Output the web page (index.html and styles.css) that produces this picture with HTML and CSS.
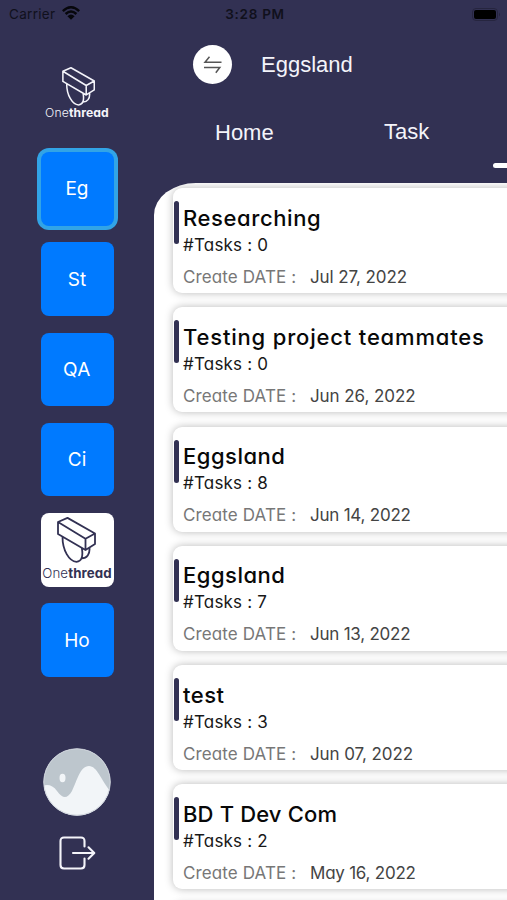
FILE: index.html
```html
<!DOCTYPE html>
<html lang="en">
<head>
<meta charset="utf-8">
<title>Onethread</title>
<link rel="stylesheet" href="styles.css">
</head>
<body>
<svg class="defs" width="0" height="0" aria-hidden="true">
  <symbol id="logo" viewBox="0 0 40 46">
    <path d="M1 5 10.5 .9 38 16.5V27L28.5 33 1 17ZM1 5 28.5 21.8 38 16.5M28.5 21.8V33M5.5 20C5.5 33 12 44.3 19.5 44.8 24.8 44.6 26.3 39 24.8 31M32.5 31C33 37 30 41.5 24.5 41.3"/>
  </symbol>
</svg>
<div class="app">
  <header class="status">
    <div class="carrier"><span>Carrier</span>
      <svg width="18" height="14" viewBox="0 0 18 14"><path d="M0.8 5.2Q9-2.6 17.2 5.2M3.6 8Q9 3 14.4 8" fill="none" stroke="#07070c" stroke-width="2.5"/><path d="M5.4 10.2Q9 7 12.6 10.2L9 13.8Z" fill="#07070c"/></svg>
    </div>
    <div class="clock">3:28 PM</div>
    <svg class="battery" width="29" height="13" viewBox="0 0 29 13"><rect x=".5" y=".5" width="25" height="12" rx="3.5" fill="none" stroke="#26253f"/><rect x="2" y="2" width="22" height="9" rx="2" fill="#000"/><path d="M27 4.5Q29 6.5 27 8.5Z" fill="#26253f"/></svg>
  </header>
  <div class="columns">
    <nav class="sidebar">
      <div class="brand"><svg class="mark" width="34" height="39"><use href="#logo"/></svg><div class="word">One<b>thread</b></div></div>
      <div class="tiles">
        <div class="tile active">Eg</div>
        <div class="tile">St</div>
        <div class="tile wide">QA</div>
        <div class="tile">Ci</div>
        <div class="tile light"><svg class="mark" width="40" height="46"><use href="#logo"/></svg><div class="word">One<b>thread</b></div></div>
        <div class="tile">Ho</div>
      </div>
      <svg class="avatar" width="68" height="68" viewBox="0 0 68 68"><defs><clipPath id="disc"><circle cx="34" cy="34" r="33.5"/></clipPath></defs><g clip-path="url(#disc)"><rect width="68" height="68" fill="#bdc6cd"/><path d="M0 38C4 36 10 37 14 43 20 51 24 51 29 43 34 33 37 18 46 18 54 18 58 32 68 44V68H0Z" fill="#f2f5f8"/><ellipse cx="19.5" cy="30" rx="3" ry="4.2" fill="#f2f5f8"/></g><circle cx="34" cy="34" r="33.2" fill="none" stroke="#d0d5dd" stroke-width="1"/></svg>
      <svg class="logout" width="37" height="34" viewBox="0 0 37 34"><path d="M25.5 10.5V5Q25.5 1.5 22 1.5H5Q1.5 1.5 1.5 5V29Q1.5 32.5 5 32.5H22Q25.5 32.5 25.5 29V22.5M14 17H35M29.5 11.3 35.3 17 29.5 22.7" fill="none" stroke="#f4f4fa" stroke-width="2.1" stroke-linecap="round" stroke-linejoin="round"/></svg>
    </nav>
    <main class="main">
      <div class="heading">
        <div class="switch"><svg width="20" height="18" viewBox="0 0 20 18"><path d="M6.5 .8 2 6.2H18.5M1 11.5H16.8L12.8 16.8" fill="none" stroke="#555" stroke-width="1.5"/></svg></div>
        <h1>Eggsland</h1>
      </div>
      <div class="tabs"><span class="home">Home</span><span class="task">Task</span><i></i></div>
      <section class="panel">
        <article class="card"><i></i><h2 class="t1">Researching</h2><p>#Tasks : 0</p><footer><span>Create DATE :</span><time>Jul 27, 2022</time></footer></article>
        <article class="card"><i></i><h2 class="t2">Testing project teammates</h2><p>#Tasks : 0</p><footer><span>Create DATE :</span><time>Jun 26, 2022</time></footer></article>
        <article class="card"><i></i><h2 class="t3">Eggsland</h2><p>#Tasks : 8</p><footer><span>Create DATE :</span><time class="narrow">Jun 14, 2022</time></footer></article>
        <article class="card"><i></i><h2 class="t3">Eggsland</h2><p>#Tasks : 7</p><footer><span>Create DATE :</span><time class="narrow">Jun 13, 2022</time></footer></article>
        <article class="card"><i></i><h2 class="t3">test</h2><p>#Tasks : 3</p><footer><span>Create DATE :</span><time>Jun 07, 2022</time></footer></article>
        <article class="card"><i></i><h2 class="t6">BD T Dev Com</h2><p>#Tasks : 2</p><footer><span>Create DATE :</span><time class="narrow">May 16, 2022</time></footer></article>
        <article class="card"></article>
      </section>
    </main>
  </div>
</div>
</body>
</html>
```
FILE: styles.css
```css
* { box-sizing: border-box; }
body { margin: 0; background: #323153; font-family: Inter, sans-serif; font-feature-settings: "cv11"; }
h1, h2, p { margin: 0; }
.defs { display: block; height: 0; }
.app { width: 507px; height: 900px; overflow: hidden; display: flex; flex-direction: column; }
.status { height: 28px; display: grid; grid-template-columns: 1fr 80px 1fr; align-items: center; padding: 0 6px 0 9px; color: #10101c; font-size: 13px; }
.carrier { display: flex; gap: 7px; align-items: center; font-size: 13.5px; letter-spacing: .3px; font-feature-settings: normal; }
.carrier svg { margin-top: -2px; }
.clock { text-align: center; font-weight: 600; font-size: 13.5px; letter-spacing: .7px; white-space: nowrap; }
.battery { justify-self: end; }
.columns { flex: 1; min-height: 0; display: flex; }
.sidebar { width: 154px; display: flex; flex-direction: column; align-items: center; padding-top: 39px; }
.brand { height: 85px; display: flex; flex-direction: column; align-items: center; color: #f4f4fa; }
.mark { fill: none; stroke: currentColor; stroke-width: 1.8; stroke-linejoin: round; flex: none; }
.brand .mark { margin-left: 4px; }
.word { font-size: 12.2px; line-height: 14px; font-weight: 300; letter-spacing: .1px; white-space: nowrap; }
.word b { font-weight: 700; }
.tiles { display: grid; grid-auto-rows: 73.5px; gap: 16.8px; width: 73px; }
.tile { background: #007aff; border-radius: 8px; color: #fff; font-size: 19px; display: flex; align-items: center; justify-content: center; }
.tile.wide { letter-spacing: .4px; }
.tile.active { box-shadow: 0 0 0 4px #32a4e6; }
.tile.light { background: #fff; color: #323153; flex-direction: column; justify-content: flex-start; padding-top: 4px; }
.tile.light .word { font-size: 13.3px; margin-top: 3px; }
.avatar { margin-top: 71px; flex: none; }
.logout { margin-top: 20px; flex: none; }
.main { width: 353px; display: flex; flex-direction: column; }
.heading { display: flex; align-items: center; gap: 29px; padding: 17px 0 0 39px; }
.switch { width: 39px; height: 39px; border-radius: 50%; background: #fff; display: flex; align-items: center; justify-content: center; }
.heading h1, .tabs { font: 22px "Liberation Sans", sans-serif; color: #f4f4fa; }
.tabs { height: 99px; display: grid; grid-template-columns: 169px 109px 1fr; padding: 35px 0 0 61px; line-height: 26px; }
.tabs .home { padding-top: 1px; }
.tabs i { height: 5px; margin-top: 44px; background: #fff; border-radius: 3px 0 0 3px; }
.panel { flex: 1; min-height: 0; overflow: hidden; background: #fff; border-top-left-radius: 42px 32px; padding: 5px 0 0 19px; display: flex; flex-direction: column; gap: 14.3px; }
.card { position: relative; flex: none; width: 360px; height: 105px; background: #fff; border-radius: 9px; box-shadow: 0 0 8px rgba(0,0,0,.28); padding: 15.5px 0 0 10px; }
.card i { position: absolute; left: 1px; top: 13px; width: 5px; height: 43px; border-radius: 2.5px; background: #323153; }
.card h2 { font-size: 22px; font-weight: 500; line-height: 28px; color: #080808; white-space: nowrap; }
.card p { font-size: 17px; line-height: 24px; color: #181818; margin-top: 1px; letter-spacing: .2px; }
.card footer { display: grid; grid-template-columns: 127px 1fr; font-size: 17px; line-height: 24px; margin-top: 8px; color: #777; letter-spacing: .12px; }
.card time { color: #444; letter-spacing: -.08px; }
.card .narrow { letter-spacing: -.23px; }
.t1 { letter-spacing: .6px; }
.t2 { letter-spacing: .82px; }
.t3 { letter-spacing: .5px; }
.t6 { letter-spacing: .15px; }
```
